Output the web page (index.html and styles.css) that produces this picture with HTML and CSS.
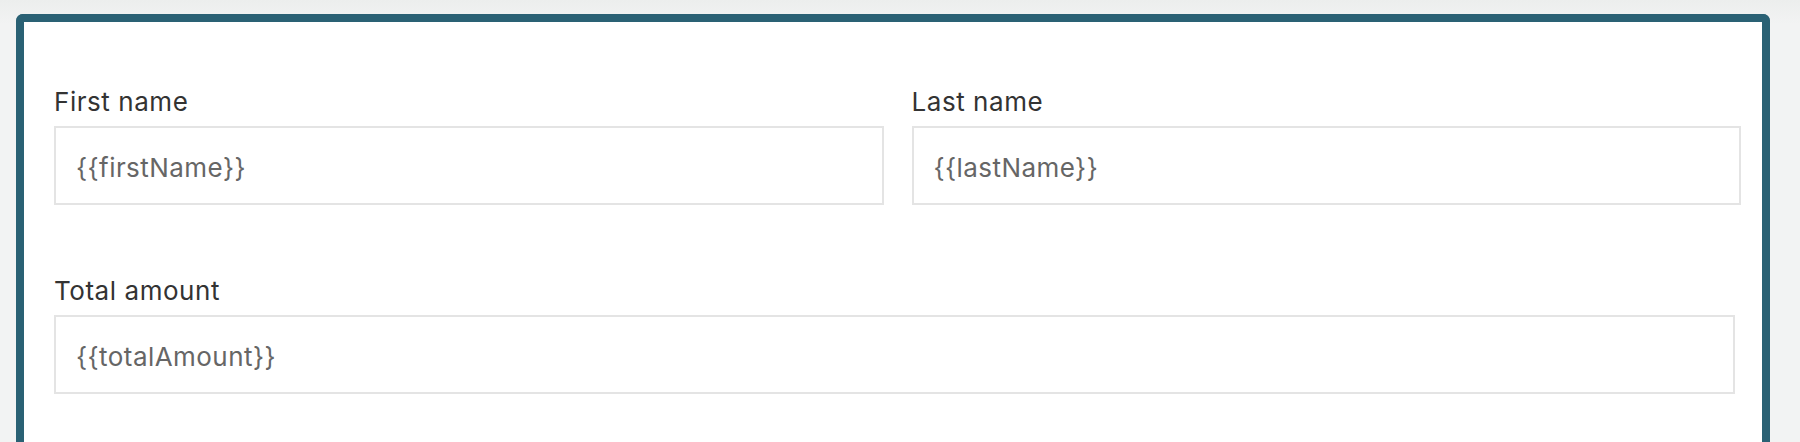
FILE: index.html
```html
<!DOCTYPE html>
<html lang="en">
<head>
<meta charset="utf-8">
<title>Form</title>
<link rel="stylesheet" href="styles.css">
</head>
<body>
  <div class="page">
    <div class="card">
      <div class="row row-two">
        <div class="field">
          <label class="label">First name</label>
          <div class="input">{{firstName}}</div>
        </div>
        <div class="field">
          <label class="label">Last name</label>
          <div class="input">{{lastName}}</div>
        </div>
      </div>
      <div class="row row-one">
        <div class="field">
          <label class="label">Total amount</label>
          <div class="input">{{totalAmount}}</div>
        </div>
      </div>
    </div>
  </div>
</body>
</html>
```
FILE: styles.css
```css
html, body {
  margin: 0;
  padding: 0;
  height: 100%;
  overflow: hidden;
}
body {
  background: linear-gradient(#eceeed 0px, #f2f3f3 24px, #f2f3f3 100%);
  font-family: Inter, "Noto Sans", sans-serif;
}
.page {
  padding: 14px 30px 0 16px;
}
.card {
  background: #ffffff;
  border: 8px solid #2a6174;
  border-bottom: none;
  border-radius: 7px 7px 0 0;
  padding: 61px 21px 60px 30px;
  min-height: 500px;
  display: flex;
  flex-direction: column;
  gap: 67px;
}
.row-two {
  display: grid;
  grid-template-columns: 1fr 1fr;
  gap: 28px;
}
.row-one {
  padding-right: 6px;
}
.field {
  display: flex;
  flex-direction: column;
  gap: 6px;
}
.label {
  font-size: 26px;
  line-height: 37px;
  letter-spacing: 0.55px;
  color: #333333;
}
.input {
  border: 2px solid #e4e4e4;
  padding: 4px 20px 0;
  box-sizing: border-box;
  height: 79px;
  display: flex;
  align-items: center;
  font-size: 26px;
  letter-spacing: 0.45px;
  color: #666666;
}
```
